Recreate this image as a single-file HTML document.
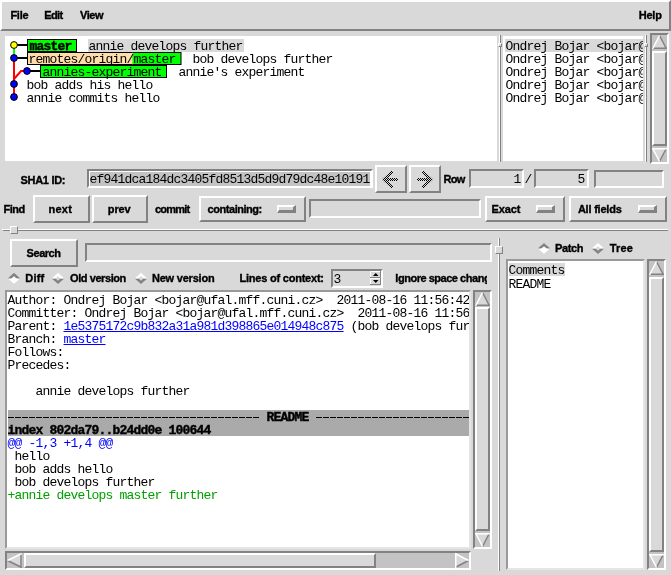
<!DOCTYPE html>
<html><head><meta charset="utf-8"><title>gitk</title>
<style>
*{box-sizing:border-box;margin:0;padding:0}
html,body{width:671px;height:575px;overflow:hidden;background:#d9d9d9}
body{position:relative;will-change:transform;font:bold 11px "Liberation Sans",sans-serif;letter-spacing:-0.3px;color:#000}
.a{position:absolute}
.r{position:absolute;border:2px solid;border-color:#fff #828282 #828282 #fff;background:#d9d9d9}
.s{position:absolute;border:2px solid;border-color:#828282 #fff #fff #828282;background:#d9d9d9}
.t{position:absolute;white-space:pre;line-height:13px;height:13px;-webkit-text-stroke:0.35px #000}
.m{position:absolute;margin-left:-0.5px;white-space:pre;font:normal 13px "Liberation Mono",monospace;letter-spacing:-0.8px;line-height:13px;height:13px}
.mb{font-weight:bold;-webkit-text-stroke:0.4px}
.w{background:#fff}
.tr{background:#c3c3c3}
.btn{text-align:center}
svg{position:absolute;left:0;top:0}
</style></head><body>

<!-- menubar -->
<div class="r" style="left:0;top:0;width:671px;height:31px"></div>
<div class="t" style="left:10.400px;top:9px;letter-spacing:-0.27px">File</div>
<div class="t" style="left:44.200px;top:9px;letter-spacing:-0.57px">Edit</div>
<div class="t" style="left:80px;top:9px;letter-spacing:-0.43px">View</div>
<div class="t" style="left:638.8px;top:9px;letter-spacing:-0.25px">Help</div>

<!-- top pane -->
<div class="a w" style="left:5px;top:36px;width:492px;height:125px"></div>
<div class="a w" style="left:503px;top:36px;width:140px;height:125px"></div>
<div class="a" style="left:499px;top:35px;width:1px;height:127px;background:#fff"></div>
<div class="a" style="left:500px;top:35px;width:1px;height:127px;background:#828282"></div>
<div class="a" style="left:645px;top:35px;width:1px;height:127px;background:#fff"></div>
<div class="a" style="left:646px;top:35px;width:1px;height:127px;background:#828282"></div>
<div class="r" style="left:498px;top:43px;width:4px;height:4px;border-width:1px"></div>
<div class="r" style="left:644px;top:43px;width:4px;height:4px;border-width:1px"></div>

<!-- commit list -->
<div class="a" style="left:88px;top:39px;width:156px;height:13px;background:#d9d9d9"></div>
<div class="a" style="left:505px;top:39px;width:138px;height:13px;background:#d9d9d9"></div>
<svg width="671" height="575" viewBox="0 0 671 575">
 <g fill="none" stroke-width="2">
  <path d="M14 45V58" stroke="#00ff00"/>
  <path d="M14 58V97" stroke="#ff0000"/>
  <path d="M14 79L21 71H27" stroke="#ff0000"/>
  <path d="M17 45H27M17 58H27M30 71H41" stroke="#000"/>
 </g>
 <g stroke="#000" stroke-width="1">
  <rect x="27.5" y="39.5" width="49" height="12" fill="#00ff00"/>
  <rect x="27.5" y="52.5" width="153.500" height="12" fill="#00ff00"/>
  <rect x="27.5" y="52.5" width="105" height="12" fill="#ffddaa" stroke="none"/>
  <path d="M27.5 52.5H132M27.5 64.5H132M27.5 52.5V64.5" fill="none"/>
  <rect x="40.500" y="65.5" width="126" height="12" fill="#00ff00"/>
  <circle cx="14" cy="45" r="3.400" fill="#ffff00"/>
  <circle cx="14" cy="58" r="3.400" fill="#0000ff"/>
  <circle cx="27" cy="71" r="3.400" fill="#0000ff"/>
  <circle cx="14" cy="84" r="3.400" fill="#0000ff"/>
  <circle cx="14" cy="97" r="3.400" fill="#0000ff"/>
 </g>
</svg>
<div class="m mb" style="left:30px;top:40px">master</div>
<div class="m" style="left:89px;top:40px">annie develops further</div>
<div class="m" style="left:29px;top:53px">remotes/origin/master</div>
<div class="m" style="left:193px;top:53px">bob develops further</div>
<div class="m" style="left:43px;top:66px">annies-experiment</div>
<div class="m" style="left:179px;top:66px">annie's experiment</div>
<div class="m" style="left:27px;top:79px">bob adds his hello</div>
<div class="m" style="left:27px;top:92px">annie commits hello</div>

<div class="a" style="left:503px;top:36px;width:140px;height:125px;overflow:hidden">
<div class="m" style="left:3px;top:4px">Ondrej Bojar &lt;bojar@ufal.mff.cuni.cz&gt;</div>
<div class="m" style="left:3px;top:17px">Ondrej Bojar &lt;bojar@ufal.mff.cuni.cz&gt;</div>
<div class="m" style="left:3px;top:30px">Ondrej Bojar &lt;bojar@ufal.mff.cuni.cz&gt;</div>
<div class="m" style="left:3px;top:43px">Ondrej Bojar &lt;bojar@ufal.mff.cuni.cz&gt;</div>
<div class="m" style="left:3px;top:56px">Ondrej Bojar &lt;bojar@ufal.mff.cuni.cz&gt;</div>
</div>

<!-- top scrollbar -->
<div class="s tr" style="left:650px;top:33px;width:19px;height:131px"></div>
<div class="r" style="left:652px;top:51px;width:15px;height:95px"></div>
<svg width="671" height="575" viewBox="0 0 671 575">
</svg>

<!-- SHA row -->
<div class="t" style="left:20.5px;top:174px;letter-spacing:-0.29px">SHA1 ID:</div>
<div class="s w" style="left:87px;top:169px;width:286px;height:19px"></div>
<div class="a" style="left:90px;top:172px;width:280px;height:14px;background:#c3c3c3"></div>
<div class="m" style="left:90px;top:173px">ef941dca184dc3405fd8513d5d9d79dc48e10191</div>
<div class="r" style="left:375px;top:165px;width:32px;height:28px"></div>
<div class="r" style="left:409px;top:165px;width:32px;height:28px"></div>
<div class="t" style="left:443.6px;top:173px;letter-spacing:-0.8px">Row</div>
<div class="s" style="left:469px;top:169px;width:55px;height:19px"></div>
<div class="m" style="left:514px;top:173px">1</div>
<div class="m" style="left:525px;top:173px">/</div>
<div class="s" style="left:534px;top:169px;width:55px;height:19px"></div>
<div class="m" style="left:578px;top:173px">5</div>
<div class="s" style="left:594px;top:170px;width:70px;height:18px"></div>

<!-- find row -->
<div class="t" style="left:3.5px;top:203px;letter-spacing:-0.5px">Find</div>
<div class="r" style="left:33px;top:195px;width:57px;height:28px"></div>
<div class="t" style="left:48.6px;top:203px;letter-spacing:0.22px">next</div>
<div class="r" style="left:92px;top:195px;width:56px;height:28px"></div>
<div class="t" style="left:107.8px;top:203px;letter-spacing:-0.12px">prev</div>
<div class="t" style="left:155px;top:203px;letter-spacing:-0.8px">commit</div>
<div class="r" style="left:199px;top:196px;width:107px;height:26px"></div>
<div class="t" style="left:207.6px;top:203px;letter-spacing:-0.46px">containing:</div>
<div class="r" style="left:277px;top:205px;width:19px;height:8px;border-width:2px 3px 3px 2px"></div>
<div class="s" style="left:309px;top:199px;width:172px;height:19px"></div>
<div class="r" style="left:485px;top:196px;width:80px;height:26px"></div>
<div class="t" style="left:491.5px;top:203px;letter-spacing:-0.12px">Exact</div>
<div class="r" style="left:536px;top:205px;width:19px;height:8px;border-width:2px 3px 3px 2px"></div>
<div class="r" style="left:569px;top:196px;width:98px;height:26px"></div>
<div class="t" style="left:577.9px;top:203px;letter-spacing:-0.21px">All fields</div>
<div class="r" style="left:638px;top:205px;width:19px;height:8px;border-width:2px 3px 3px 2px"></div>

<!-- horizontal sash -->
<div class="a" style="left:2px;top:229px;width:666px;height:1px;background:#fff"></div>
<div class="a" style="left:3px;top:230px;width:665px;height:1px;background:#828282"></div>
<div class="r" style="left:10px;top:226px;width:8px;height:8px;border-width:1px"></div>

<!-- bottom left -->
<div class="r" style="left:10px;top:239px;width:68px;height:28px"></div>
<div class="t" style="left:26.6px;top:247px;letter-spacing:-0.46px">Search</div>
<div class="s" style="left:85px;top:243px;width:407px;height:19px"></div>
<div class="t" style="left:25.300px;top:272px;letter-spacing:0.17px">Diff</div>
<div class="t" style="left:70px;top:272px;letter-spacing:-0.42px">Old version</div>
<div class="t" style="left:152px;top:272px;letter-spacing:-0.22px">New version</div>
<div class="t" style="left:239.500px;top:272px;letter-spacing:-0.22px">Lines of context:</div>
<div class="s" style="left:331px;top:269px;width:52px;height:19px"></div>
<div class="m" style="left:334px;top:273px">3</div>
<div class="a" style="left:394px;top:272px;width:92.500px;height:13px;overflow:hidden"><div class="t" style="left:1.300px;top:0;letter-spacing:-0.47px">Ignore space change</div></div>

<!-- diff text -->
<div class="a" style="left:5px;top:290px;width:466px;height:259px;border:2px solid;border-color:#999 #e5e5e5 #e5e5e5 #999;background:#fff;overflow:hidden">
 <div class="a" style="left:1px;top:118px;width:470px;height:26px;background:#aaa"></div>
 <div class="m" style="left:1px;top:2px">Author: Ondrej Bojar &lt;bojar@ufal.mff.cuni.cz&gt;  2011-08-16 11:56:42</div>
 <div class="m" style="left:1px;top:15px">Committer: Ondrej Bojar &lt;bojar@ufal.mff.cuni.cz&gt;  2011-08-16 11:56:42</div>
 <div class="m" style="left:1px;top:28px">Parent: <span style="color:#00f;text-decoration:underline">1e5375172c9b832a31a981d398865e014948c875</span> (bob develops further)</div>
 <div class="m" style="left:1px;top:41px">Branch: <span style="color:#00f;text-decoration:underline">master</span></div>
 <div class="m" style="left:1px;top:54px">Follows: </div>
 <div class="m" style="left:1px;top:67px">Precedes: </div>
 <div class="m" style="left:1px;top:93px">    annie develops further</div>
 <div class="a" style="left:1px;top:125px;width:252px;height:1px;background:repeating-linear-gradient(90deg,#000 0,#000 6px,transparent 6px,transparent 7px)"></div>
 <div class="a" style="left:309px;top:125px;width:252px;height:1px;background:repeating-linear-gradient(90deg,#000 0,#000 6px,transparent 6px,transparent 7px)"></div>
 <div class="m mb" style="left:1px;top:119px;color:transparent">------------------------------------ <span style="color:#000">README</span> ------------------------------------</div>
 <div class="m mb" style="left:1px;top:132px">index 802da79..b24dd0e 100644</div>
 <div class="m" style="left:1px;top:145px;color:#00f">@@ -1,3 +1,4 @@</div>
 <div class="m" style="left:1px;top:158px"> hello</div>
 <div class="m" style="left:1px;top:171px"> bob adds hello</div>
 <div class="m" style="left:1px;top:184px"> bob develops further</div>
 <div class="m" style="left:1px;top:197px;color:#00a000">+annie develops master further</div>
</div>

<!-- diff v scrollbar -->
<div class="s tr" style="left:473px;top:290px;width:19px;height:259px"></div>
<div class="r" style="left:475px;top:307px;width:15px;height:224px"></div>
<!-- diff h scrollbar -->
<div class="s tr" style="left:5px;top:551px;width:466px;height:19px"></div>
<div class="r" style="left:24px;top:553px;width:352px;height:15px"></div>

<!-- bottom sash -->
<div class="a" style="left:498px;top:238px;width:1px;height:333px;background:#fff"></div>
<div class="a" style="left:499px;top:238px;width:1px;height:333px;background:#828282"></div>
<div class="r" style="left:495px;top:246px;width:8px;height:8px;border-width:1px"></div>

<!-- right panel -->
<div class="t" style="left:555px;top:242px;letter-spacing:-0.38px">Patch</div>
<div class="t" style="left:609.8px;top:242px;letter-spacing:0.17px">Tree</div>
<div class="a" style="left:506px;top:259px;width:139px;height:311px;border:2px solid;border-color:#999 #e5e5e5 #e5e5e5 #999;background:#fff;overflow:hidden">
 <div class="a" style="left:1px;top:2px;width:56px;height:13px;background:#d9d9d9"></div>
 <div class="m" style="left:1px;top:3px">Comments</div>
 <div class="m" style="left:1px;top:17px">README</div>
</div>
<div class="s tr" style="left:647px;top:259px;width:19px;height:311px"></div>
<div class="r" style="left:649px;top:277px;width:15px;height:275px"></div>

<!-- icons -->
<svg width="671" height="575" viewBox="0 0 671 575">
 <defs>
  <pattern id="stip" width="2" height="2" patternUnits="userSpaceOnUse"><rect width="2" height="2" fill="#d9d9d9"/><rect width="1" height="1" fill="#000"/><rect x="1" y="1" width="1" height="1" fill="#000"/></pattern>
  <g id="au"><path d="M7.500 0L0 14H15Z" fill="#d9d9d9"/><path d="M7.500 0.500L14.500 14M0 13.250H15" stroke="#828282" stroke-width="1.500" fill="none"/><path d="M7.500 0.500L0.500 14" stroke="#fff" stroke-width="1.500" fill="none"/></g>
  <g id="ad"><path d="M0 0H15L7.500 14Z" fill="#d9d9d9"/><path d="M14.500 0L7.500 13.500" stroke="#828282" stroke-width="1.500" fill="none"/><path d="M0 0.750H15M0.500 0L7.500 13.500" stroke="#fff" stroke-width="1.500" fill="none"/></g>
  <g id="al"><path d="M0 7.500L14.750 0V15Z" fill="#d9d9d9"/><path d="M0.500 7.500L14.750 14.500M14 0V15" stroke="#828282" stroke-width="1.500" fill="none"/><path d="M0.500 7.500L14.750 0.500" stroke="#fff" stroke-width="1.500" fill="none"/></g>
  <g id="ar"><path d="M0 0L14 7.500L0 15Z" fill="#d9d9d9"/><path d="M0 14.500L13.500 7.500" stroke="#828282" stroke-width="1.500" fill="none"/><path d="M0.750 0V15M0 0.500L13.500 7.500" stroke="#fff" stroke-width="1.500" fill="none"/></g>
  <clipPath id="dc"><path d="M0 -5.600L6.250 0L0 5.600L-6.250 0Z"/></clipPath>
  <clipPath id="dt"><rect x="-7" y="-6" width="14" height="6"/></clipPath>
  <clipPath id="db"><rect x="-7" y="0" width="14" height="6"/></clipPath>
  <g id="don" clip-path="url(#dc)"><path d="M0 -5.600L6.250 0L0 5.600L-6.250 0Z" fill="#fff"/><g clip-path="url(#dt)"><path d="M-6.250 0L0 -5.600L6.250 0" stroke="#828282" stroke-width="5" fill="none"/></g></g>
  <g id="doff" clip-path="url(#dc)"><path d="M0 -5.600L6.250 0L0 5.600L-6.250 0Z" fill="#d9d9d9"/><g clip-path="url(#db)"><path d="M-6.250 0L0 5.600L6.250 0" stroke="#828282" stroke-width="5" fill="none"/></g><g clip-path="url(#dt)"><path d="M-6.250 0L0 -5.600L6.250 0" stroke="#fff" stroke-width="5" fill="none"/></g></g>
 </defs>
 <use href="#au" x="652" y="35"/>
 <use href="#ad" x="652" y="148"/>
 <use href="#au" x="475" y="292"/>
 <use href="#ad" x="475" y="533"/>
 <use href="#au" x="649" y="261"/>
 <use href="#ad" x="649" y="554"/>
 <use href="#al" x="7" y="553"/>
 <use href="#ar" x="455" y="553"/>
 <use href="#don" x="14" y="278.400"/>
 <use href="#doff" x="58" y="278.400"/>
 <use href="#doff" x="141" y="278.400"/>
 <use href="#don" x="544" y="248.500"/>
 <use href="#doff" x="598" y="248.500"/>
 <!-- arrows -->
 <g stroke="url(#stip)" stroke-width="3" fill="none" stroke-linejoin="miter">
  <path d="M384 179.500H398"/><path d="M392.500 171.500L384 179.500L392.500 187.500"/>
  <path d="M417 179.500H431"/><path d="M422.500 171.500L431 179.500L422.500 187.500"/>
 </g>
 <!-- spin arrows -->
 <g>
  <path d="M370.500 278V271.500H381" stroke="#fff" fill="none"/><path d="M380.500 271V277.500H370" stroke="#828282" fill="none"/>
  <path d="M370.500 285V278.500H381" stroke="#fff" fill="none"/><path d="M380.500 278V284.500H370" stroke="#828282" fill="none"/>
  <path d="M373 276H378.500L375.750 273Z" fill="#000"/><path d="M373 280H378.500L375.750 283Z" fill="#000"/>
 </g>
</svg>
</body></html>
